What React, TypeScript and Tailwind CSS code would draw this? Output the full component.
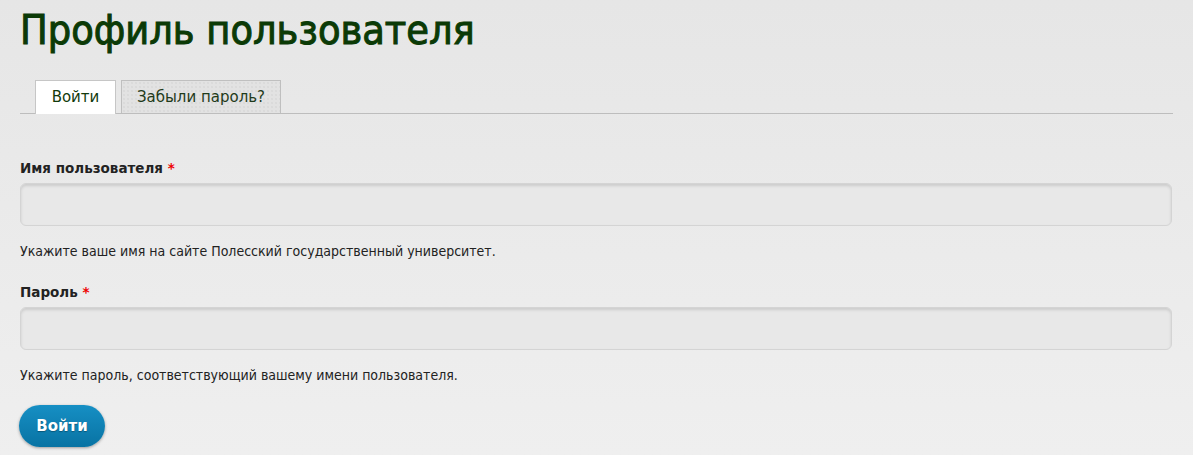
export default function App() {
  return (
    <div
      className="min-h-[455px] w-full bg-gradient-to-b from-[#e6e6e6] to-[#efefef] px-[20px] text-[#222]"
      style={{ fontFamily: '"DejaVu Sans", Verdana, sans-serif' }}
    >
      {/* title */}
      <h1 className="pt-[4px] font-['DejaVu_Sans_Condensed','DejaVu_Sans',sans-serif] text-[41px] leading-[52px] text-[#0b3a06] [-webkit-text-stroke:1px_#0b3a06]">
        Профиль пользователя
      </h1>

      {/* tabs */}
      <div className="mt-[24px] flex items-end gap-[5px] border-b border-[#bdbdbd] pl-[15px]">
        <div className="-mb-px flex h-[34px] w-[81px] items-center justify-center border border-b-0 border-[#c6c6c6] bg-white text-[15px] text-[#123a0c]">
          Войти
        </div>
        <div className="flex h-[33px] w-[160px] items-center justify-center border border-b-0 border-[#bfbfbf] bg-[#e2e2e2] bg-[radial-gradient(#d2d2d2_0.6px,transparent_0.8px)] bg-[length:4px_4px] text-[15px] text-[#1f3a1a]">
          Забыли пароль?
        </div>
      </div>

      {/* form */}
      <form className="pt-[44px]">
        <label className="block text-[13.5px] font-bold leading-[20px] text-[#222]">
          Имя пользователя <span className="text-[#e00]">*</span>
        </label>
        <input
          type="text"
          className="mt-[5px] block h-[43px] w-[1152px] rounded-[6px] border border-[#d4d4d4] bg-[#e8e8e8] shadow-[inset_0_2px_3px_rgba(0,0,0,0.12)] outline-none"
        />
        <p className="mt-[16px] font-['DejaVu_Sans_Condensed','DejaVu_Sans',sans-serif] text-[14px] leading-[18px] text-[#222]">
          Укажите ваше имя на сайте Полесский государственный университет.
        </p>

        <label className="mt-[22px] block text-[13.5px] font-bold leading-[20px] text-[#222]">
          Пароль <span className="text-[#e00]">*</span>
        </label>
        <input
          type="password"
          className="mt-[5px] block h-[43px] w-[1152px] rounded-[6px] border border-[#d4d4d4] bg-[#e8e8e8] shadow-[inset_0_2px_3px_rgba(0,0,0,0.12)] outline-none"
        />
        <p className="mt-[16px] font-['DejaVu_Sans_Condensed','DejaVu_Sans',sans-serif] text-[14px] leading-[18px] text-[#222]">
          Укажите пароль, соответствующий вашему имени пользователя.
        </p>

        <button
          type="button"
          className="mt-[21px] block h-[42px] w-[86px] -ml-px rounded-full bg-gradient-to-b from-[#168fc4] to-[#0873a3] text-[15px] font-bold text-white shadow-[0_1px_3px_rgba(0,0,0,0.35)] [text-shadow:0_1px_1px_rgba(0,0,0,0.3)]"
        >
          Войти
        </button>
      </form>
    </div>
  );
}
